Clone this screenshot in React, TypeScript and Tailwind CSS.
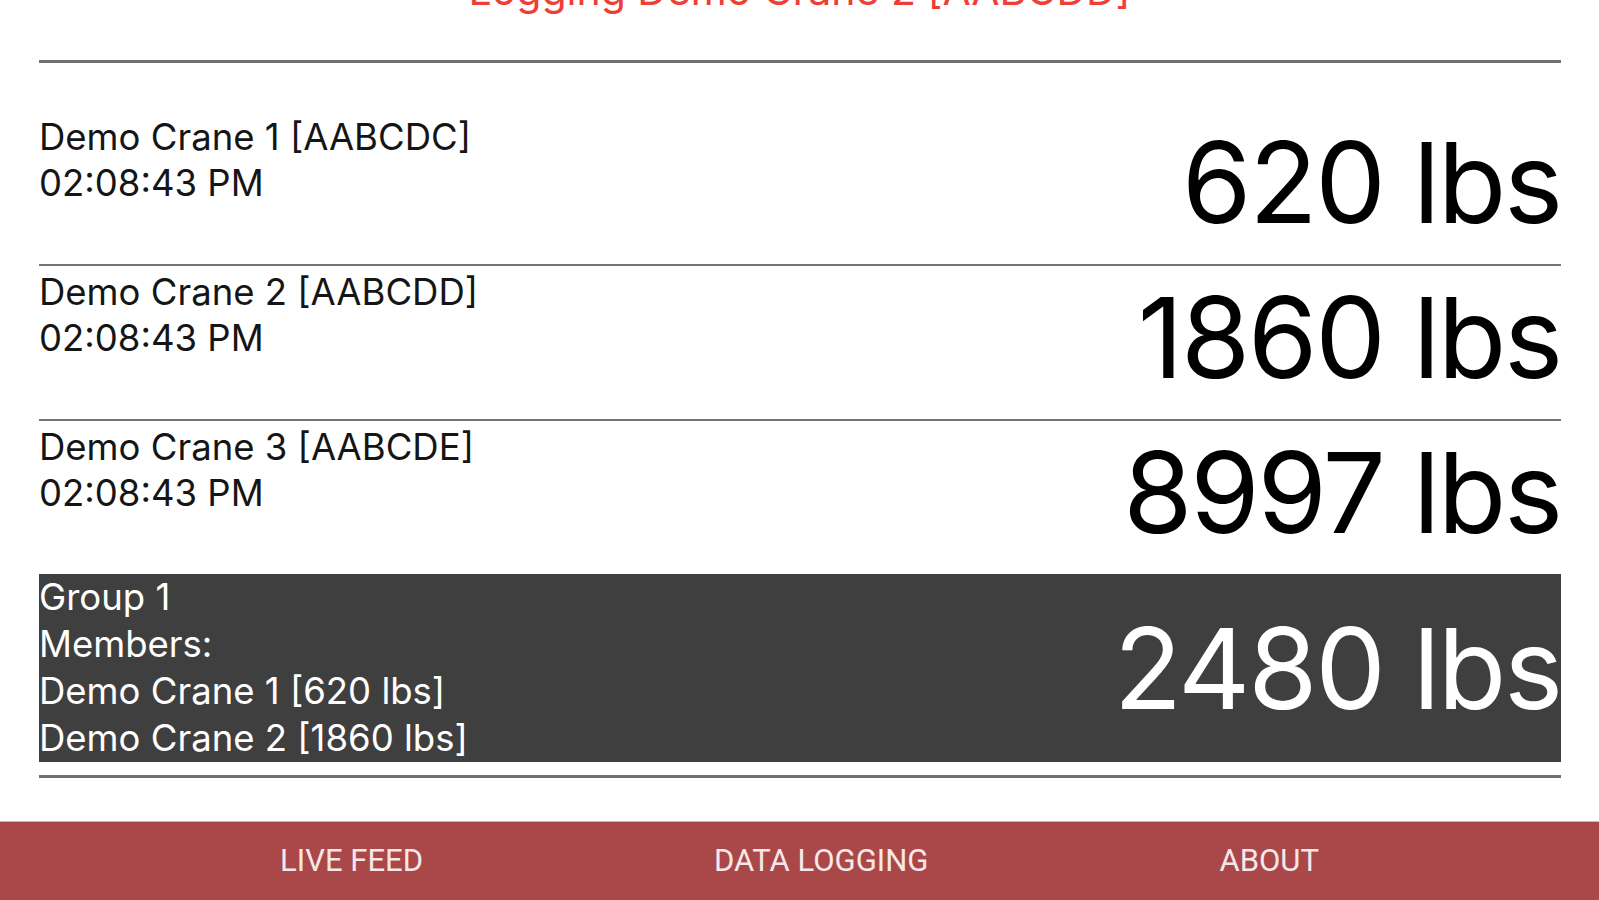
import React from "react"

type Crane = {
  name: string
  id: string
  time: string
  weight: number
}

const cranes: Crane[] = [
  { name: "Demo Crane 1", id: "AABCDC", time: "02:08:43 PM", weight: 620 },
  { name: "Demo Crane 2", id: "AABCDD", time: "02:08:43 PM", weight: 1860 },
  { name: "Demo Crane 3", id: "AABCDE", time: "02:08:43 PM", weight: 8997 },
]

function CraneRow({ crane, first }: { crane: Crane; first: boolean }) {
  return (
    <div className={`flex justify-between ${first ? "" : "border-t-2 border-[#747474]"}`}>
      <div className="h-[153px] pt-[3px] text-[36.5px] leading-[46px] text-[#151515]">
        <div>
          {crane.name} [{crane.id}]
        </div>
        <div>{crane.time}</div>
      </div>
      <div className="mt-[15px] text-[112px] leading-none tracking-[-0.02em] text-black">{crane.weight} lbs</div>
    </div>
  )
}

export default function App() {
  const group = cranes.slice(0, 2)
  const total = group.reduce((sum, c) => sum + c.weight, 0)

  return (
    <div className="flex h-[900px] flex-col overflow-hidden bg-white font-[Inter,'Liberation_Sans',sans-serif]">
      <div className="flex-1 overflow-hidden">
        <p className="-mt-[34px] text-center text-[41px] leading-[48px] text-[#ef3e36]">
          Logging Demo Crane 2 [AABCDD]
        </p>

        <div className="pl-[39px] pr-[38px]">
          <div className="mt-[46px] h-[3px] bg-[#6f6f6f]" />

          <div className="mt-[48px]">
            {cranes.map((c, i) => (
              <CraneRow key={c.id} crane={c} first={i === 0} />
            ))}

            {/* group summary */}
            <div className="flex items-center justify-between bg-[#3f3f3f] text-white">
              <div className="text-[36.5px] leading-[47px]">
                <div>Group 1</div>
                <div>Members:</div>
                {group.map((c) => (
                  <div key={c.id}>
                    {c.name} [{c.weight} lbs]
                  </div>
                ))}
              </div>
              <div className="text-[112px] leading-none tracking-[-0.02em]">{total} lbs</div>
            </div>

            <div className="mt-[13px] h-[3px] bg-[#6f6f6f]" />
          </div>
        </div>
      </div>

      <nav className="flex h-[79px] justify-center gap-[291px] border-t border-[#d9aeaf] bg-[#aa4749] pt-[23px] font-[Roboto,sans-serif] text-[31px] leading-[31px] text-[#f6e8e8]">
        <span>LIVE FEED</span>
        <span>DATA LOGGING</span>
        <span>ABOUT</span>
      </nav>
    </div>
  )
}
